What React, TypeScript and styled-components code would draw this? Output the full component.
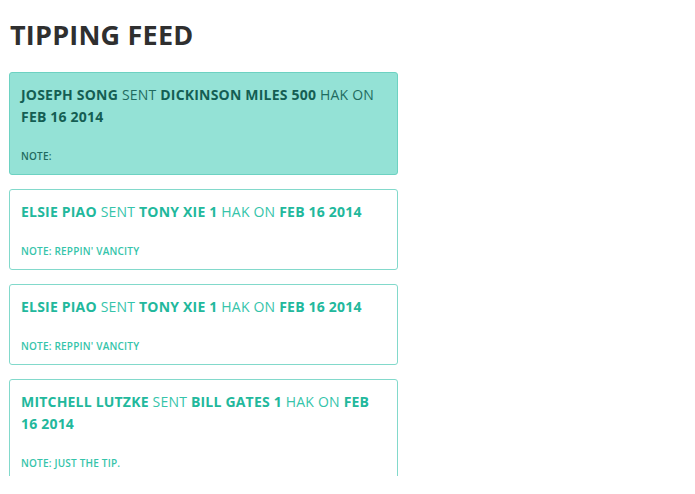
import React from "react";
import styled, { createGlobalStyle } from "styled-components";

const Global = createGlobalStyle`
  html, body { margin: 0; padding: 0; background: #fff; }
  body { font-family: "Open Sans", "DejaVu Sans", sans-serif; }
`;

const Page = styled.div`
  padding: 0 10px;
  width: 388px;
`;

const Title = styled.h1`
  margin: 0;
  padding-top: 20px;
  height: 72px;
  box-sizing: border-box;
  font-size: 27px;
  line-height: 30px;
  font-weight: 700;
  letter-spacing: 0.2px;
  color: #2f2f2f;
`;

const Feed = styled.div`
  display: flex;
  flex-direction: column;
  gap: 14px;
  height: 404px;
  overflow: hidden;
  margin-left: -1px;
`;

const Card = styled.div<{ $active?: boolean }>`
  flex: none;
  border: 1px solid ${(p) => (p.$active ? "#6dd2c2" : "#82d9cb")};
  background: ${(p) => (p.$active ? "#94e2d6" : "#fff")};
  color: ${(p) => (p.$active ? "#1f6b5f" : "#35c4aa")};
  border-radius: 3px;
  padding: 11px 11px 12px;
`;

const Line = styled.div`
  font-size: 14px;
  line-height: 22px;
  text-transform: uppercase;
  letter-spacing: 0.2px;
`;

const Strong = styled.b<{ $active?: boolean }>`
  font-weight: 700;
  color: ${(p) => (p.$active ? "#145e53" : "#22b89c")};
`;

const Note = styled.div`
  margin-top: 22px;
  font-size: 10px;
  line-height: 12px;
  font-weight: 600;
  text-transform: uppercase;
  letter-spacing: 0.2px;
`;

type Tip = { from: string; to: string; amount: string; date: string; note: string };

const tips: Tip[] = [
  { from: "Joseph Song", to: "Dickinson Miles", amount: "500", date: "Feb 16 2014", note: "" },
  { from: "Elsie Piao", to: "Tony Xie", amount: "1", date: "Feb 16 2014", note: "Reppin' Vancity" },
  { from: "Elsie Piao", to: "Tony Xie", amount: "1", date: "Feb 16 2014", note: "Reppin' Vancity" },
  { from: "Mitchell Lutzke", to: "Bill Gates", amount: "1", date: "Feb 16 2014", note: "Just the tip." },
];

export default function App() {
  return (
    <Page>
      <Global />
      <Title>TIPPING FEED</Title>
      <Feed>
        {tips.map((t, i) => {
          const a = i === 0;
          return (
            <Card key={i} $active={a}>
              <Line>
                <Strong $active={a}>{t.from}</Strong> sent{" "}
                <Strong $active={a}>
                  {t.to} {t.amount}
                </Strong>{" "}
                HAK on <Strong $active={a}>{t.date}</Strong>
              </Line>
              <Note>Note: {t.note}</Note>
            </Card>
          );
        })}
      </Feed>
    </Page>
  );
}
